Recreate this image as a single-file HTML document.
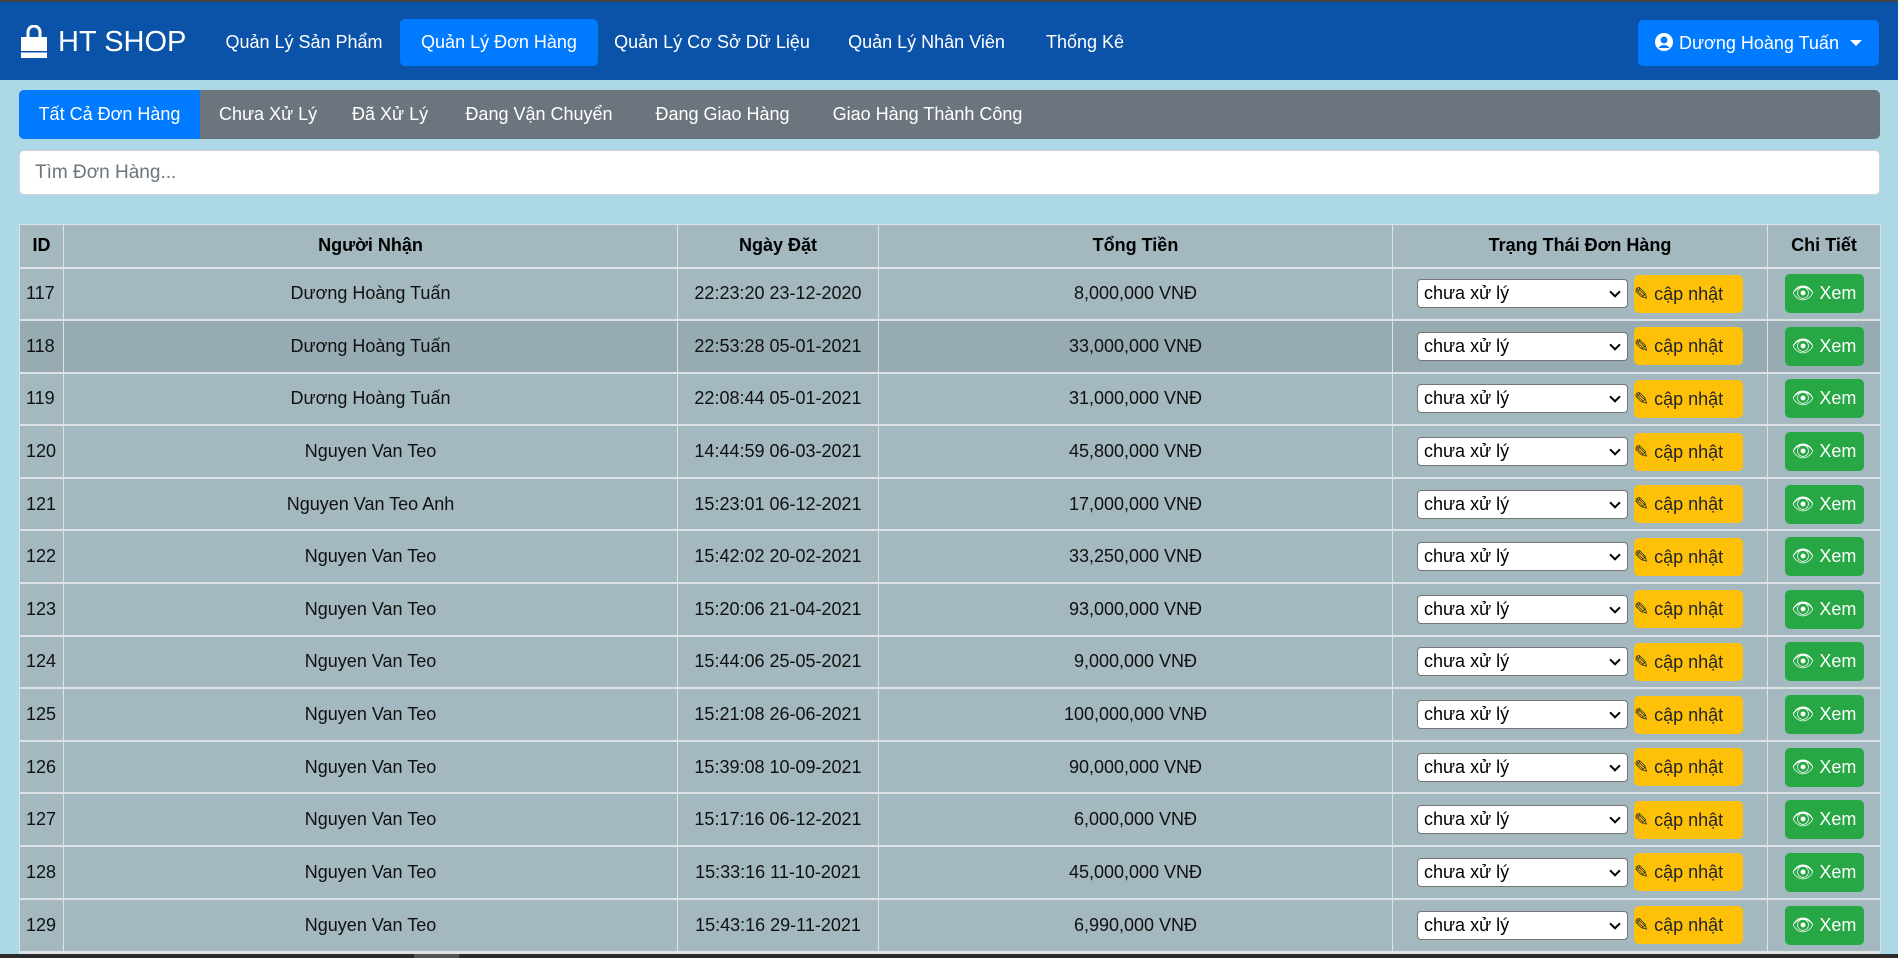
<!DOCTYPE html>
<html style="width:1898px;height:958px;overflow:hidden"><head><meta charset="utf-8">
<style>
*{box-sizing:border-box;margin:0;padding:0}
body{width:1898px;height:958px;overflow:hidden;background:#add8e6;font-family:"Liberation Sans",sans-serif;position:relative;color:#212529}
.nav{position:absolute;left:0;top:0;width:1898px;height:80px;background:#0a53a8;border-top:2px solid #444}
.brand{position:absolute;left:58px;top:20px;color:#fff;font-size:29px;line-height:40px}
.nl{position:absolute;top:17px;height:47px;line-height:47px;color:#fff;font-size:18px;text-align:center;border-radius:5px;white-space:nowrap}
.user{position:absolute;left:1638px;top:18px;width:241px;height:46px;background:#007bff;border-radius:5px;color:#fff;font-size:18px;line-height:46px;padding-left:16px;white-space:nowrap}
.tabs{position:absolute;left:19px;top:90px;width:1861px;height:49px;background:#6c757d;border-radius:5px}
.tb{position:absolute;top:0;height:49px;line-height:49px;color:#fff;font-size:18px;text-align:center;white-space:nowrap}
.search{position:absolute;left:19px;top:150px;width:1861px;height:45px;background:#fff;border-radius:5px;border:1px solid #ced4da;font-size:19px;color:#6c757d;line-height:43px;padding-left:15px}
table{position:absolute;left:19px;top:224px;width:1861px;border-collapse:collapse;table-layout:fixed;font-size:18px}
td,th{border-left:1px solid #dee2e6;border-right:1px solid #dee2e6;background:#a3b8bf;text-align:center;vertical-align:middle;padding:0;white-space:nowrap}
th{height:43px;font-weight:bold;border-top:1px solid #dee2e6;border-bottom:2px solid #dee2e6;color:#000}
td{height:52.6px;border-top:2px solid #dee2e6;color:#111}
td.id{text-align:left;padding-left:6px}
tr.h td{background:#97abb2}
.sel{display:inline-block;vertical-align:middle;width:211px;height:29px;background:#fff;border:1px solid #767676;border-radius:4px;text-align:left;padding-left:6px;font-size:18px;line-height:27px;position:relative;color:#000}
.sel:after{content:"";position:absolute;right:8px;top:8px;width:6px;height:6px;border-right:2px solid #000;border-bottom:2px solid #000;transform:rotate(45deg)}
.up{display:inline-block;vertical-align:middle;margin-left:6px;width:109px;height:38px;background:#ffc107;border-radius:5px;line-height:38px;font-size:18px;color:#212529}
.xem{display:inline-block;width:79px;height:39px;background:#28a745;border-radius:5px;line-height:39px;color:#fff;font-size:18px}
.st{padding-left:24px;text-align:left}
.sb{position:absolute;left:0;top:954px;width:1898px;height:4px;background:#2b2b2b}
</style></head><body>
<div class="nav">
<svg style="position:absolute;left:19px;top:23px" width="30" height="34" viewBox="0 0 30 34"><path d="M9 12 V7 a6 6 0 0 1 12 0 V12" fill="none" stroke="#fff" stroke-width="3"/><path d="M2 12 H28 V33 H2 Z" fill="#fff"/><rect x="2" y="26" width="26" height="1.5" fill="#0a53a8"/></svg>
<div class="brand">HT SHOP</div>
<div class="nl" style="left:218px;width:172px">Quản Lý Sản Phẩm</div>
<div class="nl" style="left:400px;width:198px;background:#007bff">Quản Lý Đơn Hàng</div>
<div class="nl" style="left:607px;width:210px">Quản Lý Cơ Sở Dữ Liệu</div>
<div class="nl" style="left:838px;width:177px">Quản Lý Nhân Viên</div>
<div class="nl" style="left:1037px;width:96px">Thống Kê</div>
<div class="user"><svg width="20" height="20" viewBox="0 0 20 20" style="vertical-align:-3px"><circle cx="10" cy="10" r="9" fill="#fff"/><circle cx="10" cy="8" r="3.5" fill="#007bff"/><path d="M4.5 16 a6 5 0 0 1 11 0" fill="#007bff"/></svg> Dương Hoàng Tuấn <span style="display:inline-block;margin-left:6px;border-left:6px solid transparent;border-right:6px solid transparent;border-top:6px solid #fff;vertical-align:3px"></span></div>
</div>
<div class="tabs">
<div class="tb" style="left:0;width:181px;background:#007bff;border-radius:5px 0 0 5px">Tất Cả Đơn Hàng</div>
<div class="tb" style="left:200px;width:94px">Chưa Xử Lý</div>
<div class="tb" style="left:333px;width:74px">Đã Xử Lý</div>
<div class="tb" style="left:445px;width:150px">Đang Vận Chuyển</div>
<div class="tb" style="left:635px;width:137px">Đang Giao Hàng</div>
<div class="tb" style="left:811px;width:195px">Giao Hàng Thành Công</div>
</div>
<div class="search">Tìm Đơn Hàng...</div>
<table>
<colgroup><col style="width:44px"><col style="width:614px"><col style="width:201px"><col style="width:514px"><col style="width:375px"><col style="width:113px"></colgroup>
<tr><th>ID</th><th>Người Nhận</th><th>Ngày Đặt</th><th>Tổng Tiền</th><th>Trạng Thái Đơn Hàng</th><th>Chi Tiết</th></tr>
<tr><td class="id">117</td><td>Dương Hoàng Tuấn</td><td>22:23:20 23-12-2020</td><td>8,000,000 VNĐ</td><td class="st"><span class="sel">chưa xử lý</span><span class="up">✎ cập nhật</span></td><td><span class="xem">👁 Xem</span></td></tr>
<tr class="h"><td class="id">118</td><td>Dương Hoàng Tuấn</td><td>22:53:28 05-01-2021</td><td>33,000,000 VNĐ</td><td class="st"><span class="sel">chưa xử lý</span><span class="up">✎ cập nhật</span></td><td><span class="xem">👁 Xem</span></td></tr>
<tr><td class="id">119</td><td>Dương Hoàng Tuấn</td><td>22:08:44 05-01-2021</td><td>31,000,000 VNĐ</td><td class="st"><span class="sel">chưa xử lý</span><span class="up">✎ cập nhật</span></td><td><span class="xem">👁 Xem</span></td></tr>
<tr><td class="id">120</td><td>Nguyen Van Teo</td><td>14:44:59 06-03-2021</td><td>45,800,000 VNĐ</td><td class="st"><span class="sel">chưa xử lý</span><span class="up">✎ cập nhật</span></td><td><span class="xem">👁 Xem</span></td></tr>
<tr><td class="id">121</td><td>Nguyen Van Teo Anh</td><td>15:23:01 06-12-2021</td><td>17,000,000 VNĐ</td><td class="st"><span class="sel">chưa xử lý</span><span class="up">✎ cập nhật</span></td><td><span class="xem">👁 Xem</span></td></tr>
<tr><td class="id">122</td><td>Nguyen Van Teo</td><td>15:42:02 20-02-2021</td><td>33,250,000 VNĐ</td><td class="st"><span class="sel">chưa xử lý</span><span class="up">✎ cập nhật</span></td><td><span class="xem">👁 Xem</span></td></tr>
<tr><td class="id">123</td><td>Nguyen Van Teo</td><td>15:20:06 21-04-2021</td><td>93,000,000 VNĐ</td><td class="st"><span class="sel">chưa xử lý</span><span class="up">✎ cập nhật</span></td><td><span class="xem">👁 Xem</span></td></tr>
<tr><td class="id">124</td><td>Nguyen Van Teo</td><td>15:44:06 25-05-2021</td><td>9,000,000 VNĐ</td><td class="st"><span class="sel">chưa xử lý</span><span class="up">✎ cập nhật</span></td><td><span class="xem">👁 Xem</span></td></tr>
<tr><td class="id">125</td><td>Nguyen Van Teo</td><td>15:21:08 26-06-2021</td><td>100,000,000 VNĐ</td><td class="st"><span class="sel">chưa xử lý</span><span class="up">✎ cập nhật</span></td><td><span class="xem">👁 Xem</span></td></tr>
<tr><td class="id">126</td><td>Nguyen Van Teo</td><td>15:39:08 10-09-2021</td><td>90,000,000 VNĐ</td><td class="st"><span class="sel">chưa xử lý</span><span class="up">✎ cập nhật</span></td><td><span class="xem">👁 Xem</span></td></tr>
<tr><td class="id">127</td><td>Nguyen Van Teo</td><td>15:17:16 06-12-2021</td><td>6,000,000 VNĐ</td><td class="st"><span class="sel">chưa xử lý</span><span class="up">✎ cập nhật</span></td><td><span class="xem">👁 Xem</span></td></tr>
<tr><td class="id">128</td><td>Nguyen Van Teo</td><td>15:33:16 11-10-2021</td><td>45,000,000 VNĐ</td><td class="st"><span class="sel">chưa xử lý</span><span class="up">✎ cập nhật</span></td><td><span class="xem">👁 Xem</span></td></tr>
<tr><td class="id">129</td><td>Nguyen Van Teo</td><td>15:43:16 29-11-2021</td><td>6,990,000 VNĐ</td><td class="st"><span class="sel">chưa xử lý</span><span class="up">✎ cập nhật</span></td><td><span class="xem">👁 Xem</span></td></tr>
</table>
<div style="position:absolute;left:19px;top:951px;width:1861px;height:3px;background:#dee2e6"></div>
<div class="sb"><div style="position:absolute;left:414px;top:0;width:45px;height:4px;background:#555"></div></div>
</body></html>
